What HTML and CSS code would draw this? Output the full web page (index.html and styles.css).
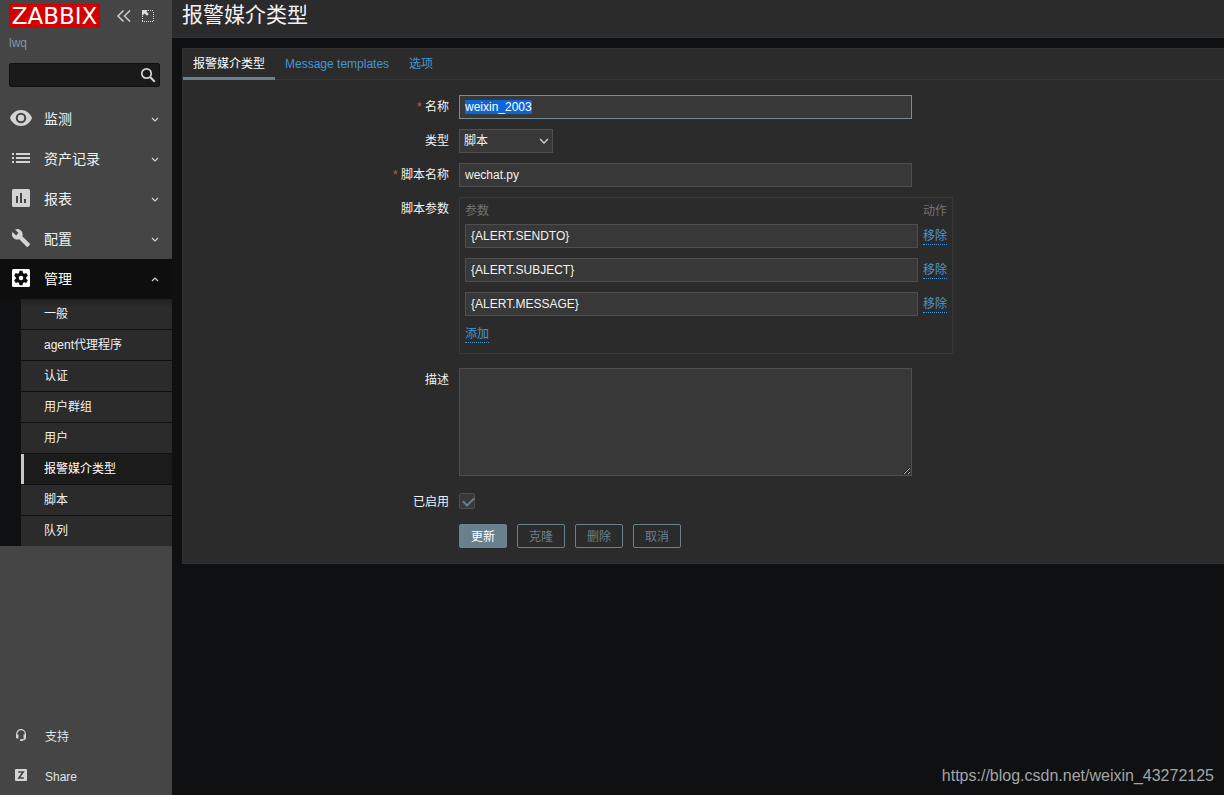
FILE: index.html
```html
<!DOCTYPE html>
<html lang="zh-CN">
<head>
<meta charset="utf-8">
<title>报警媒介类型</title>
<link rel="stylesheet" href="styles.css">
</head>
<body>
<div class="layout">
  <aside class="sidebar">
    <div class="brand">
      <a class="logo" href="#">ZABBIX</a>
      <button class="icon-button" type="button" aria-label="Collapse sidebar">
        <svg width="16" height="14" viewBox="0 0 16 14"><path d="M7.500 1.500L2 7l5.500 5.500M14 1.500L8.500 7l5.500 5.500" fill="none" stroke="#d0d0d0" stroke-width="1.500"/></svg>
      </button>
      <button class="icon-button" type="button" aria-label="Hide sidebar">
        <svg width="14" height="14" viewBox="0 0 14 14"><path d="M7 1.500h6M12.500 3v10M1 12.500h11M1.500 7v6" fill="none" stroke="#d0d0d0" stroke-dasharray="1 1"/><path d="M1 1h6L5.400 2.600 7.800 5 6 6.800 3.600 4.400 1 7z" fill="#dcdcdc"/></svg>
      </button>
    </div>
    <div class="server">lwq</div>
    <form class="search" role="search">
      <input class="search-input" type="text" aria-label="Search">
      <button class="search-button" type="button" aria-label="Search">
        <svg width="16" height="16" viewBox="0 0 16 16"><circle cx="6.500" cy="6.500" r="4.700" fill="none" stroke="#d4d4d4" stroke-width="1.700"/><path d="M9.800 9.800l5 5" stroke="#d4d4d4" stroke-width="2"/></svg>
      </button>
    </form>
    <nav class="menu">
      <a class="menu-item" href="#">
        <svg class="menu-icon" viewBox="0 0 24 24"><path fill-rule="evenodd" d="M12 4C7 4 2.700 7.300 1 12c1.700 4.700 6 8 11 8s9.300-3.300 11-8c-1.700-4.700-6-8-11-8zm0 13.300a5.300 5.300 0 1 1 0-10.600 5.300 5.300 0 0 1 0 10.600zm0-8.500a3.200 3.200 0 1 0 0 6.400 3.200 3.200 0 0 0 0-6.400z"/></svg>
        <span class="menu-label">监测</span>
        <svg class="chevron" viewBox="0 0 8 8"><path d="M1 3l3 3 3-3"/></svg>
      </a>
      <a class="menu-item" href="#">
        <svg class="menu-icon" viewBox="0 0 24 24"><path d="M3 7h2v2H3zm0 4h2v2H3zm0 4h2v2H3zM7 7h14v2H7zm0 4h14v2H7zm0 4h14v2H7z"/></svg>
        <span class="menu-label">资产记录</span>
        <svg class="chevron" viewBox="0 0 8 8"><path d="M1 3l3 3 3-3"/></svg>
      </a>
      <a class="menu-item" href="#">
        <svg class="menu-icon" viewBox="0 0 24 24"><path fill-rule="evenodd" d="M4.500 3h15A1.500 1.500 0 0 1 21 4.500v15a1.500 1.500 0 0 1-1.500 1.500h-15A1.500 1.500 0 0 1 3 19.500v-15A1.500 1.500 0 0 1 4.500 3zM7 10v7h2v-7zm4-3v10h2V7zm4 6v4h2v-4z"/></svg>
        <span class="menu-label">报表</span>
        <svg class="chevron" viewBox="0 0 8 8"><path d="M1 3l3 3 3-3"/></svg>
      </a>
      <a class="menu-item" href="#">
        <svg class="menu-icon" viewBox="0 0 24 24"><path transform="translate(1.500 1.500) scale(.87)" d="M22.300 18.600l-8.700-8.500c.8-2.200.4-4.700-1.400-6.500C10.300 1.700 7.500 1.300 5.200 2.400l4 4-2.800 2.800-4.100-4C1.100 7.500 1.600 10.200 3.500 12.100c1.800 1.800 4.400 2.200 6.600 1.400l8.500 8.600c.4.400 1 .4 1.400 0l2.200-2.200c.5-.3.500-1 .1-1.300z"/></svg>
        <span class="menu-label">配置</span>
        <svg class="chevron" viewBox="0 0 8 8"><path d="M1 3l3 3 3-3"/></svg>
      </a>
      <a class="menu-item menu-item-open" href="#">
        <svg class="menu-icon" viewBox="0 0 24 24"><rect x="3" y="3" width="18" height="18" rx="1.500"/><path fill="#0e0e0f" fill-rule="evenodd" transform="translate(1.200 1.200) scale(.9)" d="M10.300 4h3.400l.5 2.400 1.300.8 2.400-.8 1.700 3-1.800 1.700v1.800l1.800 1.700-1.700 3-2.400-.8-1.300.8-.5 2.400h-3.400l-.5-2.400-1.300-.8-2.400.8-1.700-3 1.800-1.700v-1.800L4.400 9.400l1.700-3 2.400.8 1.300-.8zM12 9.500a2.500 2.500 0 1 0 0 5 2.500 2.500 0 0 0 0-5z"/></svg>
        <span class="menu-label">管理</span>
        <svg class="chevron" viewBox="0 0 8 8"><path d="M1 6l3-3 3 3"/></svg>
      </a>
      <div class="submenu">
        <a class="submenu-item" href="#">一般</a>
        <a class="submenu-item" href="#">agent代理程序</a>
        <a class="submenu-item" href="#">认证</a>
        <a class="submenu-item" href="#">用户群组</a>
        <a class="submenu-item" href="#">用户</a>
        <a class="submenu-item submenu-item-active" href="#">报警媒介类型</a>
        <a class="submenu-item" href="#">脚本</a>
        <a class="submenu-item" href="#">队列</a>
      </div>
    </nav>
    <nav class="footer-menu">
      <a class="footer-item" href="#">
        <svg class="footer-icon" viewBox="0 0 12 12"><path d="M1.700 7V5a4.300 4.300 0 0 1 8.600 0v3.500c0 1.500-1 2.400-2.500 2.400H6" fill="none" stroke="#d4d4d4" stroke-width="1.200"/><path d="M1 5.500h2.500v4H2a1 1 0 0 1-1-1zm7.500 0H11v3a1 1 0 0 1-1 1H8.500zM5 10.200h2.500V12H5z"/></svg>
        <span class="footer-label">支持</span>
      </a>
      <a class="footer-item" href="#">
        <svg class="footer-icon" viewBox="0 0 12 12"><rect width="12" height="12" rx="1"/><path d="M3.200 3h5L3.900 9h5" fill="none" stroke="#454545" stroke-width="1.600"/></svg>
        <span class="footer-label">Share</span>
      </a>
    </nav>
  </aside>

  <main class="content">
    <header class="page-header"><h1 class="page-title">报警媒介类型</h1></header>
    <section class="panel">
      <nav class="tabs">
        <a class="tab tab-active" href="#">报警媒介类型</a>
        <a class="tab" href="#">Message templates</a>
        <a class="tab" href="#">选项</a>
      </nav>
      <form class="form">
        <label class="form-label required" for="name">名称</label>
        <input class="text-field field" id="name" type="text" value="weixin_2003" autofocus>

        <label class="form-label" for="type">类型</label>
        <div class="select-wrap">
          <select class="select" id="type"><option>脚本</option></select>
          <svg class="select-arrow" viewBox="0 0 10 6"><path d="M1 1l4 4 4-4" fill="none" stroke="#d4d4d4" stroke-width="1.300"/></svg>
        </div>

        <label class="form-label required" for="script">脚本名称</label>
        <input class="text-field field" id="script" type="text" value="wechat.py">

        <div class="form-label">脚本参数</div>
        <div class="params">
          <table class="params-table">
            <thead><tr><th>参数</th><th>动作</th></tr></thead>
            <tbody>
              <tr><td><input class="text-field field" type="text" aria-label="参数 1" value="{ALERT.SENDTO}"></td><td><button class="link-button" type="button">移除</button></td></tr>
              <tr><td><input class="text-field field" type="text" aria-label="参数 2" value="{ALERT.SUBJECT}"></td><td><button class="link-button" type="button">移除</button></td></tr>
              <tr><td><input class="text-field field" type="text" aria-label="参数 3" value="{ALERT.MESSAGE}"></td><td><button class="link-button" type="button">移除</button></td></tr>
            </tbody>
          </table>
          <button class="link-button" type="button">添加</button>
        </div>

        <label class="form-label" for="description">描述</label>
        <textarea class="text-area field" id="description"></textarea>

        <label class="form-label enabled-label" for="enabled">已启用</label>
        <input class="checkbox" id="enabled" type="checkbox" checked>

        <div class="actions">
          <button class="button button-primary" type="button">更新</button>
          <button class="button" type="button">克隆</button>
          <button class="button" type="button">删除</button>
          <button class="button" type="button">取消</button>
        </div>
      </form>
    </section>
    <footer class="credit">https://blog.csdn.net/weixin_43272125</footer>
  </main>
</div>
<script src="script.js"></script>
</body>
</html>
```
FILE: styles.css
```css
* { box-sizing: border-box; }

body {
  margin: 0;
  background: #0e1012;
  color: #f2f2f2;
  font: 12px/16px "Liberation Sans", "Noto Sans CJK SC", sans-serif;
}

a { text-decoration: none; }

button, input, select, textarea { font: inherit; color: inherit; }

button { padding: 0; border: 0; background: none; }

svg { display: block; }

.layout { display: flex; min-height: 100vh; }

/* Sidebar */
.sidebar {
  flex: none;
  display: flex;
  flex-direction: column;
  width: 172px;
  background: #454545;
}

.brand { display: flex; align-items: center; gap: 9px; padding: 4px 9px 0; }

.logo {
  width: 91px;
  margin-right: 7px;
  background: #d40000;
  color: #fff;
  font: 23px/24px "DejaVu Sans", sans-serif;
  text-align: center;
}

.server { padding: 7px 9px 12px; color: #8394a8; }

.search {
  display: flex;
  align-items: center;
  height: 24px;
  margin: 0 12px 0 9px;
  padding-right: 3px;
  border: 1px solid #0d1114;
  border-radius: 2px;
  background: #1a1a1a;
}

.search-input {
  flex: 1;
  min-width: 0;
  border: 0;
  outline: 0;
  background: none;
}

.menu { padding-top: 12px; }

.menu-item {
  display: flex;
  align-items: center;
  height: 40px;
  padding: 0 13px 0 9px;
  color: #f2f2f2;
  font-size: 14px;
}

.menu-icon { width: 24px; height: 24px; margin: 0 11px 2px 0; fill: #d4d4d4; }

.menu-label { flex: 1; }

.chevron {
  width: 8px;
  height: 8px;
  fill: none;
  stroke: #d4d4d4;
  stroke-width: 1.2;
}

.menu-item-open { background: #0e0e0f; color: #fff; }

.menu-item-open .menu-icon { fill: #fff; }

.submenu {
  display: grid;
  gap: 1px;
  padding-left: 21px;
  background: #0e1012;
}

.submenu-item {
  height: 30px;
  padding-left: 23px;
  background: #2b2b2b;
  color: #f2f2f2;
  line-height: 30px;
}

.submenu-item:first-child { background: linear-gradient(#202020, #2b2b2b 8px); }

.submenu-item-active {
  padding-left: 20px;
  border-left: 3px solid #c8c8c8;
  background: #1b1b1b;
  color: #fff;
}

.footer-menu { margin-top: auto; }

.footer-item {
  display: flex;
  align-items: center;
  gap: 18px;
  height: 40px;
  padding-left: 15px;
  color: #dfe4e8;
}

.footer-icon { width: 12px; height: 12px; fill: #d4d4d4; }

.footer-label { padding-top: 3px; }

/* Page */
.content { flex: 1; display: flex; flex-direction: column; min-width: 0; }

.page-header {
  height: 38px;
  padding-left: 10px;
  border-bottom: 1px solid #303030;
  background: #2b2b2b;
}

.page-title { margin: 0; font-size: 21px; font-weight: 400; line-height: 30px; }

.panel {
  margin: 10px 0 0 10px;
  border: 1px solid #303030;
  border-right: 0;
  background: #2b2b2b;
}

.tabs { display: flex; border-bottom: 1px solid #383838; }

.tab {
  height: 30px;
  padding: 0 10px;
  color: #4796d4;
  line-height: 30px;
}

.tab-active {
  height: 31px;
  margin-bottom: -1px;
  border-bottom: 3px solid #69808d;
  color: #fff;
}

.form {
  display: grid;
  grid-template-columns: 266px minmax(0, 1fr);
  gap: 10px;
  justify-items: start;
  padding: 15px 0;
}

.form-label { justify-self: end; padding-top: 4px; }

.required::before { content: "* "; color: #d64e4e; }

.field {
  width: 453px;
  max-width: 100%;
  border: 1px solid #4f4f4f;
  outline: 0;
  background: #383838;
}

.text-field { height: 24px; padding: 0 5px; }

.field:focus { border-color: #768d99; }

::selection { background: #0b67d5; color: #fff; }

.select-wrap { display: grid; align-items: center; }

.select {
  grid-area: 1 / 1;
  appearance: none;
  width: 94px;
  height: 24px;
  padding: 0 4px;
  border: 1px solid #4f4f4f;
  border-radius: 0;
  background: #383838;
}

.select-arrow {
  grid-area: 1 / 1;
  justify-self: end;
  width: 10px;
  height: 6px;
  margin-right: 4px;
  pointer-events: none;
}

.params { padding: 5px 5px 10px; border: 1px solid #383838; }

.params-table { border-collapse: collapse; }

.params-table th {
  padding: 0 0 5px;
  color: #737373;
  font-weight: 400;
  text-align: left;
}

.params-table td { padding: 0 0 10px; }

.params-table th + th, .params-table td + td { padding-left: 5px; }

.params-table .field { display: block; }

.link-button {
  border-bottom: 1px dotted #4796d4;
  color: #4796d4;
  line-height: 16px;
}

.text-area { display: block; height: 108px; margin-top: 4px; resize: vertical; }

.form-label[for="description"] { padding-top: 8px; }

.enabled-label { padding-top: 8px; }

.checkbox {
  appearance: none;
  width: 16px;
  height: 16px;
  margin: 7px 0 5px;
  border: 1px solid #4f4f4f;
  border-radius: 2px;
  background: #383838;
}

.checkbox:checked::before {
  content: "";
  display: block;
  width: 9px;
  height: 5px;
  margin: 3px 0 0 3px;
  border: solid #69808d;
  border-width: 0 0 2px 2px;
  transform: rotate(-45deg);
}

.actions { grid-column: 2; display: flex; gap: 10px; }

.button {
  width: 48px;
  height: 24px;
  padding-top: 1px;
  border: 1px solid #69808d;
  border-radius: 2px;
  color: #69808d;
}

.button-primary { background: #69808d; color: #fff; }

.credit {
  margin: auto 10px 7px 0;
  color: #a4a5a6;
  font-size: 16px;
  line-height: 24px;
  text-align: right;
}
```
FILE: script.js
```js
const nameField = document.getElementById("name");
nameField.focus();
nameField.select();
```
